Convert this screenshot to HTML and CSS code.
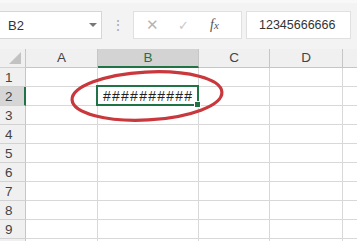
FILE: index.html
```html
<!DOCTYPE html>
<html lang="en">
<head>
    <meta charset="UTF-8">
    <title>Sheet</title>
    <link rel="stylesheet" href="styles.css">
</head>
<body>
<div class="toolbar">
    <div class="namebox">
        <span>B2</span>
        <i class="arrow"></i>
    </div>
    <div class="grip">&#8942;</div>
    <div class="btns">
        <span class="cancel">&#10005;</span>
        <span class="enter">&#10003;</span>
        <span class="fx">f<small>x</small></span>
    </div>
    <div class="formula">12345666666</div>
</div>
<div class="sheet">
    <div class="row head">
        <div class="rh corner"><i></i></div>
        <div class="c a">A</div>
        <div class="c b sel">B</div>
        <div class="c cc">C</div>
        <div class="c d">D</div>
        <div class="c e"></div>
    </div>
    <div class="row"><div class="rh">1</div><div class="c a"></div><div class="c b"></div><div class="c cc"></div><div class="c d"></div><div class="c e"></div></div>
    <div class="row"><div class="rh sel">2</div><div class="c a"></div><div class="c b active">##########</div><div class="c cc"></div><div class="c d"></div><div class="c e"></div></div>
    <div class="row"><div class="rh">3</div><div class="c a"></div><div class="c b"></div><div class="c cc"></div><div class="c d"></div><div class="c e"></div></div>
    <div class="row"><div class="rh">4</div><div class="c a"></div><div class="c b"></div><div class="c cc"></div><div class="c d"></div><div class="c e"></div></div>
    <div class="row"><div class="rh">5</div><div class="c a"></div><div class="c b"></div><div class="c cc"></div><div class="c d"></div><div class="c e"></div></div>
    <div class="row"><div class="rh">6</div><div class="c a"></div><div class="c b"></div><div class="c cc"></div><div class="c d"></div><div class="c e"></div></div>
    <div class="row"><div class="rh">7</div><div class="c a"></div><div class="c b"></div><div class="c cc"></div><div class="c d"></div><div class="c e"></div></div>
    <div class="row"><div class="rh">8</div><div class="c a"></div><div class="c b"></div><div class="c cc"></div><div class="c d"></div><div class="c e"></div></div>
    <div class="row"><div class="rh">9</div><div class="c a"></div><div class="c b"></div><div class="c cc"></div><div class="c d"></div><div class="c e"></div></div>
    <div class="row"><div class="rh"></div><div class="c a"></div><div class="c b"></div><div class="c cc"></div><div class="c d"></div><div class="c e"></div></div>
    <svg class="mark" width="170" height="64" viewBox="0 0 170 64">
        <ellipse cx="85" cy="32" rx="75" ry="24" transform="rotate(-3 85 32)"
                 fill="none" stroke="#c9383c" stroke-width="3.2"/>
    </svg>
</div>
</body>
</html>
```

FILE: styles.css
```css
body{
    margin:0;
    width:357px;
    height:241px;
    overflow:hidden;
    background:#fff;
    font-family:"Liberation Sans", Arial, sans-serif;
}
.toolbar{
    height:49px;
    box-sizing:border-box;
    padding-top:8px;
    background:#f3f3f3;
    border-top:3px solid #f8f8f8;
    display:flex;
    align-items:flex-start;
}
.namebox{
    width:102px;
    height:28px;
    box-sizing:border-box;
    background:#fff;
    border:1px solid #d6d6d6;
    border-left:none;
    display:flex;
    align-items:center;
    padding-left:8px;
    font-size:13px;
    color:#333;
    position:relative;
}
.namebox .arrow{
    position:absolute;
    left:89px;
    top:11px;
    border-left:4px solid transparent;
    border-right:4px solid transparent;
    border-top:4px solid #777;
}
.grip{
    width:31px;
    text-align:center;
    font-size:14px;
    line-height:28px;
    color:#aaa;
}
.btns{
    width:109px;
    height:28px;
    box-sizing:border-box;
    background:#fff;
    border:1px solid #e0e0e0;
    display:flex;
    align-items:center;
    position:relative;
}
.cancel{
    position:absolute;
    left:12px;
    font-size:15px;
    color:#b5b5b5;
}
.enter{
    position:absolute;
    left:44px;
    font-size:13px;
    color:#c8c8c8;
}
.fx{
    position:absolute;
    left:76px;
    font-family:"Liberation Serif", serif;
    font-style:italic;
    font-size:14px;
    color:#555;
}
.fx small{
    font-size:11px;
}
.formula{
    margin-left:4px;
    height:28px;
    box-sizing:border-box;
    background:#fff;
    border:1px solid #e0e0e0;
    padding-left:12px;
    line-height:26px;
    font-size:12.5px;
    color:#333;
    white-space:nowrap;
    flex:1;
    margin-right:6px;
}
.sheet{
    position:relative;
}
.row{
    display:flex;
    height:19px;
}
.row > div{
    height:19px;
    box-sizing:border-box;
    border-right:1px solid #d8d8d8;
    border-bottom:1px solid #d8d8d8;
}
.rh{
    width:26px;
    background:#f0f0f0;
    font-size:13.5px;
    color:#444;
    padding-left:5px;
    line-height:19px;
    border-right-color:#c6c6c6 !important;
    border-bottom-color:#d2d2d2 !important;
}
.rh.sel{
    background:#d6d6d6;
    border-right:2px solid #217346 !important;
}
.c.a{ width:72px; }
.c.b{ width:101px; }
.c.cc{ width:71px; }
.c.d{ width:73px; }
.c.e{ flex:1; border-right:none !important; }
.head .c{
    background:#f0f0f0;
    text-align:center;
    font-size:13.5px;
    line-height:18px;
    color:#444;
    border-right-color:#c6c6c6;
    border-bottom-color:#c6c6c6;
}
.head .c.sel{
    background:#d3d3d3;
    color:#217346;
    border-bottom:2px solid #217346;
}
.corner{
    position:relative;
}
.corner i{
    position:absolute;
    right:4px;
    bottom:3px;
    width:0;
    height:0;
    border-left:12px solid transparent;
    border-bottom:12px solid #c2c2c2;
}
.active{
    position:relative;
    font-size:14px;
    letter-spacing:1.25px;
    line-height:18px;
    padding-left:5px;
    color:#222;
}
.active::after{
    content:"";
    position:absolute;
    left:-2px;
    top:-2px;
    right:-1px;
    bottom:-1px;
    border:2px solid #217346;
}
.active::before{
    content:"";
    position:absolute;
    right:-3px;
    bottom:-3px;
    width:5px;
    height:5px;
    background:#217346;
    border:1px solid #fff;
    z-index:1;
}
.mark{
    position:absolute;
    left:62px;
    top:15px;
}
```
